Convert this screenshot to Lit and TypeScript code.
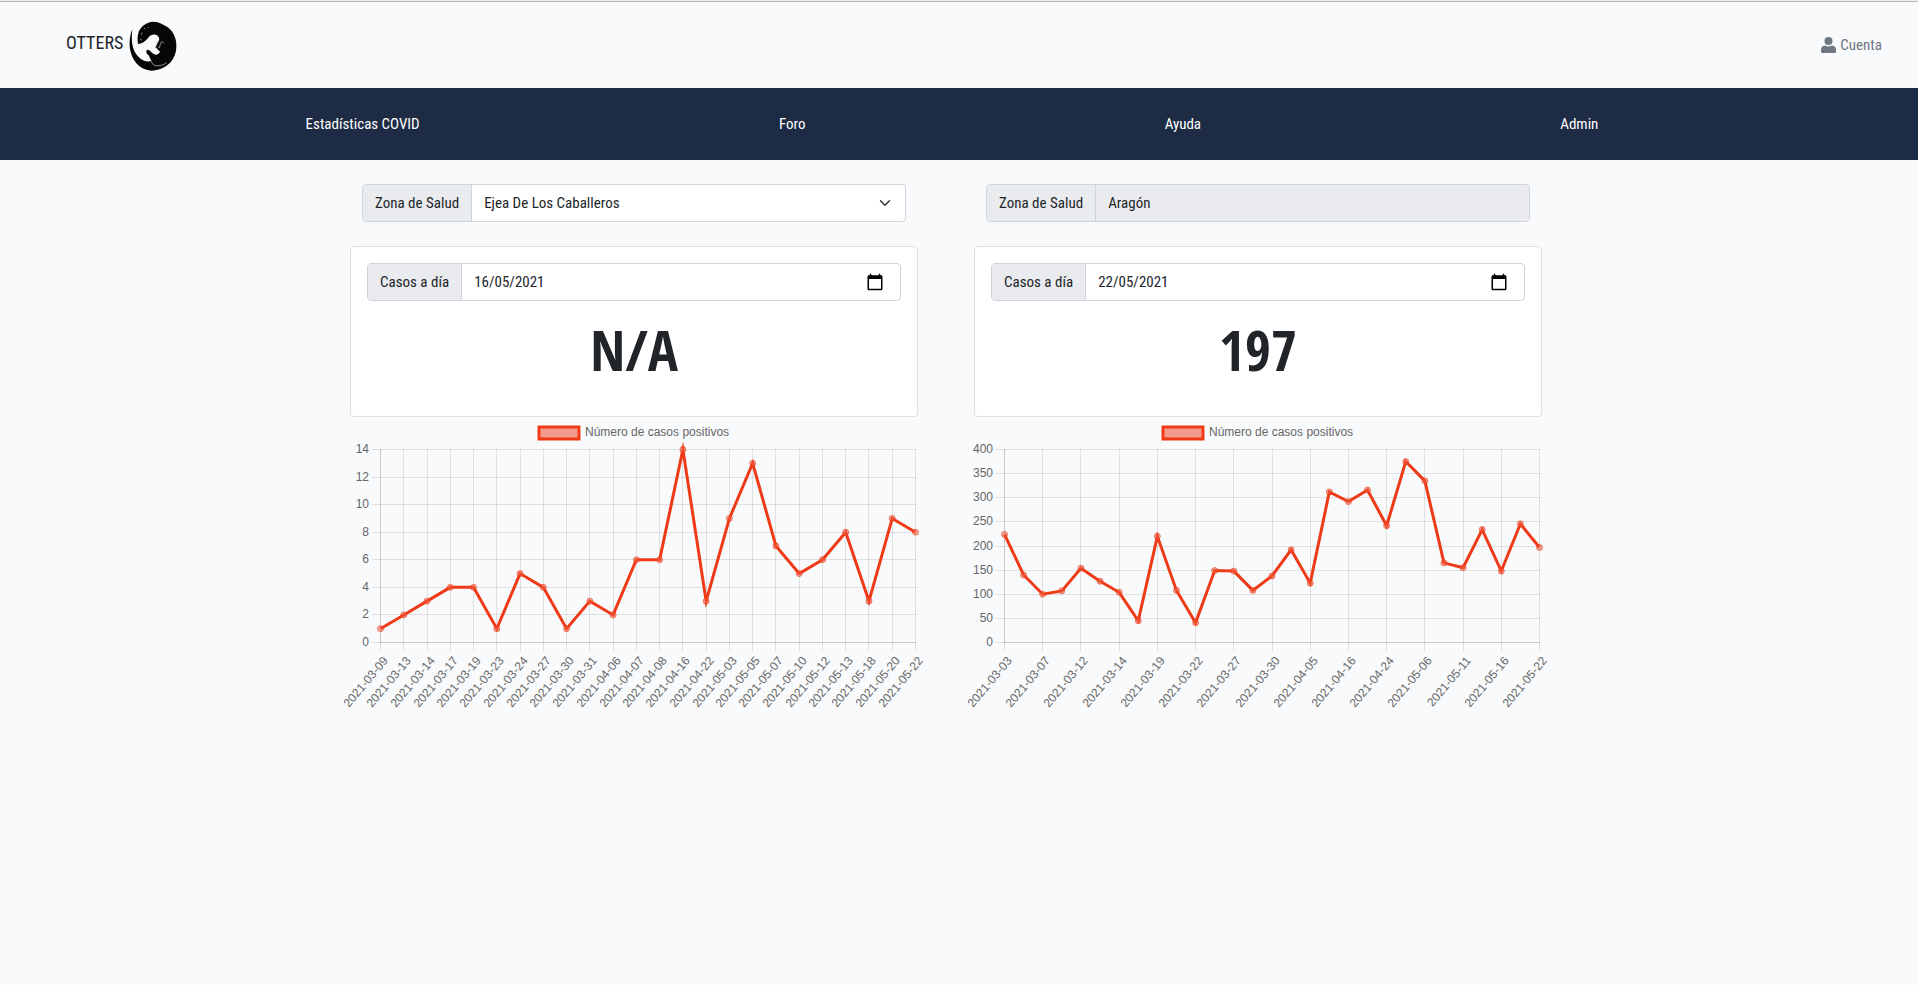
import { LitElement, html, svg, css } from "lit";
import { customElement, property } from "lit/decorators.js";

interface Series {
  labels: string[];
  values: number[];
  labelEvery: number;
  max: number;
  step: number;
}

const LOCAL: Series = {
  labels: [
    "2021-03-09", "2021-03-13", "2021-03-14", "2021-03-17", "2021-03-19", "2021-03-23",
    "2021-03-24", "2021-03-27", "2021-03-30", "2021-03-31", "2021-04-06", "2021-04-07",
    "2021-04-08", "2021-04-16", "2021-04-22", "2021-05-03", "2021-05-05", "2021-05-07",
    "2021-05-10", "2021-05-12", "2021-05-13", "2021-05-18", "2021-05-20", "2021-05-22",
  ],
  values: [1, 2, 3, 4, 4, 1, 5, 4, 1, 3, 2, 6, 6, 14, 3, 9, 13, 7, 5, 6, 8, 3, 9, 8],
  labelEvery: 1,
  max: 14,
  step: 2,
};

const REGION: Series = {
  labels: [
    "2021-03-03", "2021-03-07", "2021-03-12", "2021-03-14", "2021-03-19",
    "2021-03-22", "2021-03-27", "2021-03-30", "2021-04-05", "2021-04-16",
    "2021-04-24", "2021-05-06", "2021-05-11", "2021-05-16", "2021-05-22",
  ],
  values: [
    224, 140, 100, 107, 154, 127, 104, 45, 220, 108, 41, 149, 148, 108, 138,
    192, 123, 312, 292, 316, 242, 375, 335, 165, 155, 234, 148, 246, 197,
  ],
  labelEvery: 2,
  max: 400,
  step: 50,
};

@customElement("case-chart")
export class CaseChart extends LitElement {
  @property({ attribute: false }) series!: Series;

  static styles = css`
    :host { display: block; }
    .chart { display: block; width: 100%; height: auto; overflow: visible; }
    .text { font: 12px "Liberation Sans", Arial, sans-serif; fill: #666; }
    .end { text-anchor: end; }
    .grid { stroke: rgba(0, 0, 0, 0.1); stroke-width: 1; }
    .line { fill: none; stroke: #ee3a17; stroke-width: 3; stroke-miterlimit: 10; }
    .dot { fill: rgba(238, 90, 65, 0.5); stroke: rgba(238, 58, 23, 0.6); stroke-width: 1; }
    .key { fill: rgba(238, 58, 23, 0.5); stroke: #ee3a17; stroke-width: 3; }
  `;

  render() {
    const { labels, values, labelEvery, max, step } = this.series;
    const left = 30.5, right = 565.5, top = 32.5, bottom = 225.5;
    const px = (i: number) => left + (i * (right - left)) / (values.length - 1);
    const py = (v: number) => bottom - (v * (bottom - top)) / max;
    const snap = (n: number) => Math.floor(n) + 0.5;
    const ticks = Array.from({ length: max / step + 1 }, (_, i) => i * step);
    return html`
      <svg class="chart" viewBox="0 0 568 296" role="img" aria-label="Número de casos positivos">
        <rect class="key" x="189" y="10" width="40" height="12"></rect>
        <text class="text" x="235" y="19">Número de casos positivos</text>
        ${ticks.map((v) => svg`
          <line class="grid" x1="22" x2="566" y1=${snap(py(v))} y2=${snap(py(v))}></line>
          <text class="text end" x="19" y=${snap(py(v)) + 3}>${v}</text>`)}
        ${labels.map((label, i) => {
          const x = snap(px(i * labelEvery));
          return svg`
          <line class="grid" x1=${x} x2=${x} y1="32" y2="234"></line>
          <text class="text end" transform="translate(${x + 8} 244) rotate(-50)">${label}</text>`;
        })}
        <line class="grid" x1=${left} x2=${left} y1="32" y2="226"></line>
        <line class="grid" x1="30" x2="566" y1=${bottom} y2=${bottom}></line>
        <polyline class="line" points=${values.map((v, i) => `${px(i)},${py(v)}`).join(" ")}></polyline>
        ${values.map((v, i) => svg`<circle class="dot" cx=${px(i)} cy=${py(v)} r="3"></circle>`)}
      </svg>
    `;
  }
}

@customElement("app-root")
export class AppRoot extends LitElement {
  static styles = css`
    :host {
      display: block;
      min-height: 100vh;
      background: #f8fafc;
      color: #212529;
      font: 15px/24px "Ubuntu Condensed", "Roboto Condensed", "Arial Narrow", sans-serif;
    }
    *, *::before, *::after { box-sizing: border-box; }
    a { color: inherit; text-decoration: none; }
    .header {
      display: flex;
      align-items: center;
      justify-content: space-between;
      height: 88px;
      padding: 2px 36px 0 66px;
      background: linear-gradient(#efefef 0 1px, #b5b6b7 1px 2px, transparent 2px);
    }
    .brand {
      display: flex;
      align-items: flex-start;
      gap: 6px;
      padding-top: 4px;
      font-size: 18px;
      line-height: 44px;
    }
    .logo { display: block; width: 48px; height: 52px; }
    .account { display: flex; align-items: center; gap: 4px; color: #6f7782; }
    .user { width: 15px; height: 16px; fill: currentColor; }
    .nav {
      display: flex;
      align-items: center;
      justify-content: space-around;
      height: 72px;
      padding: 0 140px 0 126px;
      background: #1d2b45;
      color: #fff;
    }
    .main {
      display: grid;
      grid-template-columns: 1fr 1fr;
      gap: 56px;
      max-width: 1218px;
      margin: 0 auto;
      padding: 24px 26px 24px 0;
    }
    .panel { min-width: 0; }
    .zone { padding: 0 12px; margin-bottom: 24px; }
    .group {
      display: flex;
      height: 38px;
      border: 1px solid #ced4da;
      border-radius: 4px;
      background: #fff;
      overflow: hidden;
    }
    .label {
      flex: none;
      padding: 6px 12px;
      border-right: 1px solid #ced4da;
      background: #e9ebef;
    }
    .field { display: grid; flex: 1; align-items: center; min-width: 0; }
    .control {
      grid-area: 1 / 1;
      width: 100%;
      height: 36px;
      margin: 0;
      padding: 0 12px;
      border: 0;
      outline-offset: -2px;
      appearance: none;
      background: none;
      color: inherit;
      opacity: 1;
      font: inherit;
    }
    .control:disabled { background: #e9ebef; }
    .chevron { grid-area: 1 / 1; justify-self: end; margin-right: 12px; pointer-events: none; }
    .pick {
      grid-area: 1 / 1;
      justify-self: end;
      display: block;
      margin-right: 16px;
      padding: 0;
      border: 0;
      background: none;
      color: #000;
    }
    .pick svg { display: block; }
    .card {
      height: 171px;
      padding: 16px;
      border: 1px solid #dfe1e4;
      border-radius: 4px;
      background: #fff;
    }
    .count {
      margin: 12px 0 0;
      font-family: "Ubuntu Condensed", "Open Sans Condensed", "Roboto Condensed", sans-serif;
      font-size: 56px;
      line-height: 72px;
      font-weight: 700;
      text-align: center;
    }
  `;

  private dateField(id: string, value: string) {
    return html`
      <div class="group">
        <label class="label" for=${id}>Casos a día</label>
        <div class="field">
          <input class="control" id=${id} type="text" inputmode="numeric" .value=${value} />
          <button class="pick" type="button" aria-label="Abrir calendario">
            <svg width="18" height="18" viewBox="0 0 24 24" fill="currentColor">
              <path d="M20 3h-1V1h-2v2H7V1H5v2H4c-1.100 0-2 .9-2 2v16c0 1.100.9 2 2 2h16c1.100 0 2-.9 2-2V5c0-1.100-.9-2-2-2zm0 18H4V8h16v13z"></path>
            </svg>
          </button>
        </div>
      </div>
    `;
  }

  render() {
    return html`
      <header class="header">
        <a class="brand" href="#">
          <span>OTTERS</span>
          <svg class="logo" viewBox="0 0 144 156" aria-hidden="true">
            <path fill="#060606" d="M10 24C3 40 0 66 3 84C8 114 28 146 66 149C88 149 116 138 130 117C141 101 144 82 141 61C137 39 126 24 111 16C99 7 86 2 73 2C52 3 35 17 29 33C25 45 25 57 27 69C39 68 49 61 58 50C65 40 77 37 86 44C93 51 92 58 86 65L79 81C85 78 84 88 91 89C96 93 88 101 80 101C70 99 65 87 55 86C49 90 52 97 59 103L67 120C47 126 28 112 18 94C8 76 7 50 10 24Z"></path>
            <path fill="none" stroke="#c9cbcd" stroke-width="2" stroke-linecap="round" d="M87 58L79 77M98 62L89 81L93 77M101 62L104 66M66 121Q70 130 78 134Q100 136 112 126M37 40L39 36M46 24L47 22M58 20L59 19M34 54L38 57"></path>
          </svg>
        </a>
        <a class="account" href="#">
          <svg class="user" viewBox="0 0 15 16" aria-hidden="true">
            <circle cx="7.500" cy="4" r="4"></circle>
            <path d="M4 8.600Q7.500 10.600 11 8.600Q15 9 15 13V14.500Q15 16 13.500 16H1.500Q0 16 0 14.500V13Q0 9 4 8.600Z"></path>
          </svg>
          <span>Cuenta</span>
        </a>
      </header>
      <nav class="nav">
        <a href="#">Estadísticas COVID</a>
        <a href="#">Foro</a>
        <a href="#">Ayuda</a>
        <a href="#">Admin</a>
      </nav>
      <main class="main">
        <section class="panel">
          <div class="zone">
            <div class="group">
              <label class="label" for="zone">Zona de Salud</label>
              <div class="field">
                <select class="control" id="zone">
                  <option>Ejea De Los Caballeros</option>
                </select>
                <svg class="chevron" width="16" height="12" viewBox="0 0 16 16" aria-hidden="true">
                  <path d="M2 5l6 6 6-6" fill="none" stroke="#343a40" stroke-width="2" stroke-linecap="round" stroke-linejoin="round"></path>
                </svg>
              </div>
            </div>
          </div>
          <div class="card">
            ${this.dateField("date-local", "16/05/2021")}
            <p class="count">N/A</p>
          </div>
          <case-chart .series=${LOCAL}></case-chart>
        </section>
        <section class="panel">
          <div class="zone">
            <div class="group">
              <label class="label" for="region">Zona de Salud</label>
              <div class="field">
                <input class="control" id="region" type="text" value="Aragón" disabled />
              </div>
            </div>
          </div>
          <div class="card">
            ${this.dateField("date-region", "22/05/2021")}
            <p class="count">197</p>
          </div>
          <case-chart .series=${REGION}></case-chart>
        </section>
      </main>
    `;
  }
}
